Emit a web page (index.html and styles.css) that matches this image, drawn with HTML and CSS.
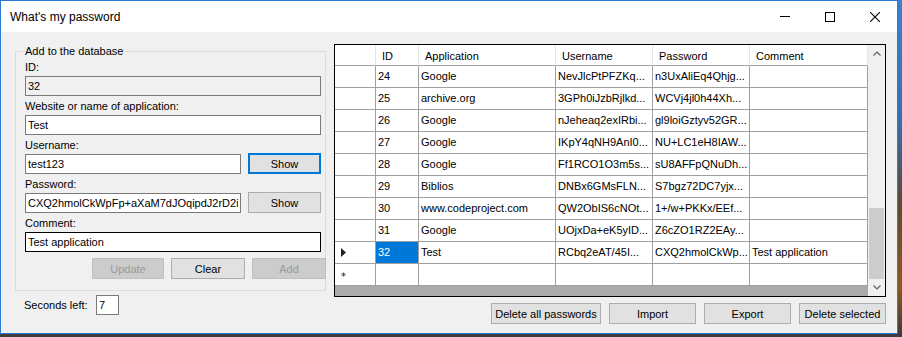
FILE: index.html
```html
<!DOCTYPE html>
<html lang="en">
<head>
    <meta charset="UTF-8">
    <title>What's my password</title>
    <link rel="stylesheet" href="styles.css">
</head>
<body>

    <div class="window">
        <!-- barra de titulo -->
        <div class="titlebar">
            <span class="title">What's my password</span>
            <div class="caption">
                <span class="caption-btn"><svg width="10" height="10"><line x1="0" y1="4.5" x2="10" y2="4.5" stroke="#000"/></svg></span>
                <span class="caption-btn"><svg width="10" height="10"><rect x="0.5" y="0.5" width="9" height="9" fill="none" stroke="#000"/></svg></span>
                <span class="caption-btn"><svg width="10" height="10"><path d="M0 0L10 10M10 0L0 10" stroke="#000" stroke-width="1.1"/></svg></span>
            </div>
        </div>

        <div class="client">
            <!-- formulario -->
            <div class="left">
                <fieldset class="group">
                    <legend>Add to the database</legend>
                    <div class="field">
                        <label>ID:</label>
                        <input class="box readonly" value="32" readonly>
                    </div>
                    <div class="field">
                        <label>Website or name of application:</label>
                        <input class="box" value="Test">
                    </div>
                    <div class="field">
                        <label>Username:</label>
                        <div class="row">
                            <input class="box short" value="test123">
                            <button class="btn show focused">Show</button>
                        </div>
                    </div>
                    <div class="field">
                        <label>Password:</label>
                        <div class="row">
                            <input class="box short" value="CXQ2hmolCkWpFp+aXaM7dJOqipdJ2rD2iKS9">
                            <button class="btn show">Show</button>
                        </div>
                    </div>
                    <div class="field">
                        <label>Comment:</label>
                        <input class="box dark" value="Test application">
                    </div>
                    <div class="actions">
                        <button class="btn update" disabled>Update</button>
                        <button class="btn clear">Clear</button>
                        <button class="btn add" disabled>Add</button>
                    </div>
                </fieldset>
                <div class="seconds">
                    <span class="seconds-label">Seconds left:</span>
                    <input class="box tiny" value="7">
                </div>
            </div>

            <!-- tabela de senhas -->
            <div class="right">
                <div class="grid">
                    <div class="cells">
                        <div class="cell head"></div>
                        <div class="cell head">ID</div>
                        <div class="cell head">Application</div>
                        <div class="cell head">Username</div>
                        <div class="cell head">Password</div>
                        <div class="cell head">Comment</div>

                        <div class="cell rowhead"></div><div class="cell">24</div><div class="cell">Google</div><div class="cell">NevJlcPtPFZKq...</div><div class="cell">n3UxAliEq4Qhjg...</div><div class="cell"></div>
                        <div class="cell rowhead"></div><div class="cell">25</div><div class="cell">archive.org</div><div class="cell">3GPh0iJzbRjlkd...</div><div class="cell">WCVj4jl0h44Xh...</div><div class="cell"></div>
                        <div class="cell rowhead"></div><div class="cell">26</div><div class="cell">Google</div><div class="cell">nJeheaq2exIRbi...</div><div class="cell">gl9loiGztyv52GR...</div><div class="cell"></div>
                        <div class="cell rowhead"></div><div class="cell">27</div><div class="cell">Google</div><div class="cell">IKpY4qNH9AnI0...</div><div class="cell">NU+LC1eH8IAW...</div><div class="cell"></div>
                        <div class="cell rowhead"></div><div class="cell">28</div><div class="cell">Google</div><div class="cell">Ff1RCO1O3m5s...</div><div class="cell">sU8AFFpQNuDh...</div><div class="cell"></div>
                        <div class="cell rowhead"></div><div class="cell">29</div><div class="cell">Biblios</div><div class="cell">DNBx6GMsFLN...</div><div class="cell">S7bgz72DC7yjx...</div><div class="cell"></div>
                        <div class="cell rowhead"></div><div class="cell">30</div><div class="cell">www.codeproject.com</div><div class="cell">QW2ObIS6cNOt...</div><div class="cell">1+/w+PKKx/EEf...</div><div class="cell"></div>
                        <div class="cell rowhead"></div><div class="cell">31</div><div class="cell">Google</div><div class="cell">UOjxDa+eK5yID...</div><div class="cell">Z6cZO1RZ2EAy...</div><div class="cell"></div>
                        <div class="cell rowhead"><svg width="5" height="9"><polygon points="0,0 5,4.5 0,9" fill="#222"/></svg></div><div class="cell selected">32</div><div class="cell">Test</div><div class="cell">RCbq2eAT/45I...</div><div class="cell">CXQ2hmolCkWp...</div><div class="cell">Test application</div>
                        <div class="cell rowhead"><svg width="5" height="5"><path d="M2.5 0.5V4.5M0.5 1.5L4.5 3.5M4.5 1.5L0.5 3.5" stroke="#555" stroke-width="1"/></svg></div><div class="cell"></div><div class="cell"></div><div class="cell"></div><div class="cell"></div><div class="cell"></div>
                    </div>
                    <div class="vscroll">
                        <div class="arrow"><svg width="8" height="5"><polyline points="0.5,4.5 4,1 7.5,4.5" fill="none" stroke="#606060" stroke-width="1.2"/></svg></div>
                        <div class="track"><div class="thumb"></div></div>
                        <div class="arrow"><svg width="8" height="5"><polyline points="0.5,0.5 4,4 7.5,0.5" fill="none" stroke="#606060" stroke-width="1.2"/></svg></div>
                    </div>
                </div>
                <div class="grid-actions">
                    <button class="btn wide">Delete all passwords</button>
                    <button class="btn">Import</button>
                    <button class="btn">Export</button>
                    <button class="btn">Delete selected</button>
                </div>
            </div>
        </div>
    </div>

</body>
</html>
```

FILE: styles.css
```css
* {
    box-sizing: border-box;
}
body {
    margin: 0;
    width: 902px;
    height: 337px;
    overflow: hidden;
    font-family: "Liberation Sans", Arial, sans-serif;
    font-size: 11px;
    color: #000;
    background: linear-gradient(180deg, #3a82cf 0%, #3570b0 35%, #5a4a35 60%, #8a5a22 85%, #3b3a3f 100%); /* desktop atras */
}
.window {
    width: 898px;
    height: 334px;
    border: 1px solid #2b7bd2;
    background-color: #f0f0f0;
    display: flex;
    flex-direction: column;
}
.titlebar {
    height: 31px;
    background-color: #fff;
    display: flex;
    align-items: center;
}
.title {
    flex: 1;
    font-size: 12px;
    line-height: 14px;
    padding-left: 9px;
}
.caption {
    display: flex;
}
.caption-btn {
    width: 45px;
    height: 31px;
    display: flex;
    align-items: center;
    justify-content: center;
}
.caption-btn svg {
    display: block;
}
.client {
    flex: 1;
    display: flex;
    gap: 8px;
    padding-left: 14px;
}
.left {
    width: 311px;
    display: flex;
    flex-direction: column;
}
.group {
    margin: 13px 0 0;
    padding: 3px 4px 11px 9px;
    border: 1px solid #dcdcdc;
    min-width: 0;
}
.group legend {
    padding: 0 2px;
    margin-left: -2px;
    line-height: 13px;
}
.field {
    margin-bottom: 4px;
}
.field label {
    display: block;
    line-height: 13px;
    margin-bottom: 2px;
}
.box {
    display: block;
    width: 100%;
    height: 20px;
    margin: 0;
    padding: 0 2px;
    border: 1px solid #7a7a7a;
    background-color: #fff;
    color: #000;
    font-family: "Liberation Sans", Arial, sans-serif;
    font-size: 11px;
    outline: none;
}
.box.readonly {
    background-color: #f0f0f0;
}
.box.dark {
    border-color: #000;
}
.box.short {
    width: 216px;
    flex: none;
}
.box.tiny {
    width: 23px;
}
.row {
    display: flex;
    gap: 7px;
}
.btn {
    height: 21px;
    margin: 0;
    padding: 0;
    border: 1px solid #adadad;
    background-color: #e1e1e1;
    color: #000;
    font-family: "Liberation Sans", Arial, sans-serif;
    font-size: 11px;
}
.btn:disabled {
    background-color: #cccccc;
    border-color: #bfbfbf;
    color: #9a9a9a;
}
.btn.show {
    width: 73px;
    margin-top: -1px;
    margin-bottom: -1px;
}
.btn.focused {
    border-color: #0078d7;
    box-shadow: inset 0 0 0 1px #0078d7;
}
.actions {
    display: flex;
    justify-content: flex-end;
    gap: 7px;
    margin-top: 6px;
    margin-right: -5px;
}
.actions .update {
    width: 72px;
}
.actions .clear,
.actions .add {
    width: 74px;
}
.seconds {
    display: flex;
    align-items: center;
    margin-top: 4px;
    padding-left: 9px;
}
.seconds-label {
    width: 72px;
}
.right {
    width: 552px;
    margin-top: 12px;
    display: flex;
    flex-direction: column;
}
.grid {
    height: 253px;
    border: 1px solid #000;
    background-color: #ababab;
    display: flex;
}
.cells {
    width: 533px;
    display: grid;
    grid-template-columns: 41px 43px 137px 97px 97px 118px;
    grid-template-rows: 21px repeat(10, 22px);
    align-content: start;
}
.cell {
    background-color: #fff;
    border-right: 1px solid #a0a0a0;
    border-bottom: 1px solid #a0a0a0;
    padding: 0 2px 1px;
    display: flex;
    align-items: center;
    white-space: nowrap;
    overflow: hidden;
    line-height: 13px;
}
.cell.head {
    padding: 2px 0 0 6px;
    border-right-color: #e5e5e5;
}
.cell.rowhead {
    padding: 0 0 0 6px;
}
.cell.selected {
    background-color: #0078d7;
    color: #fff;
}
.vscroll {
    width: 17px;
    background-color: #f0f0f0;
    display: flex;
    flex-direction: column;
}
.arrow {
    height: 17px;
    display: flex;
    align-items: center;
    justify-content: center;
}
.arrow svg {
    display: block;
}
.track {
    flex: 1;
    padding: 0 1px;
    display: flex;
    flex-direction: column;
    justify-content: flex-end;
}
.thumb {
    height: 71px;
    background-color: #cdcdcd;
}
.grid-actions {
    display: flex;
    justify-content: flex-end;
    gap: 8px;
    margin-top: 6px;
}
.grid-actions .btn {
    width: 87px;
}
.grid-actions .btn.wide {
    width: 110px;
}
```
